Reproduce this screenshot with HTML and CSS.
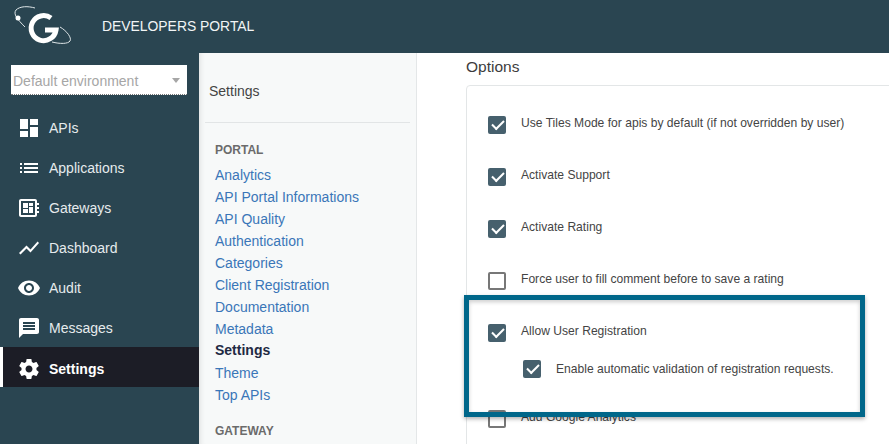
FILE: index.html
```html
<!DOCTYPE html>
<html lang="en">
  <head>
    <meta charset="UTF-8" />
    <title>Developers Portal</title>
    <link rel="stylesheet" href="styles.css">
  </head>
  <body>
    <header class="topbar">
      <svg class="logo" width="72" height="46" viewBox="0 0 72 46" fill="none">
        <path d="M35 5 C28 3 20 3 16 7 C13 11 17 16 25 24" stroke="#dfe6e8" stroke-width="1"/>
        <circle cx="18" cy="15" r="2.5" fill="#fff"/>
        <path d="M60 24 C67 28 72 35 70 38 C68 41 60 41 52 39" stroke="#dfe6e8" stroke-width="1"/>
        <path d="M51 15 A12.5 12.5 0 1 0 56 27 L45 27" stroke="#fff" stroke-width="5"/>
      </svg>
      <span class="brand">DEVELOPERS PORTAL</span>
    </header>

    <div class="content">
      <aside class="sidebar">
        <div class="env-select">
          <span>Default environment</span>
          <i class="caret"></i>
        </div>
        <nav class="menu">
          <a class="menu-item"><svg viewBox="0 0 24 24"><path d="M3 13h8V3H3v10zm0 8h8v-6H3v6zm10 0h8V11h-8v10zm0-18v6h8V3h-8z"/></svg>APIs</a>
          <a class="menu-item"><svg viewBox="0 0 24 24"><path d="M3 13h2v-2H3v2zm0 4h2v-2H3v2zm0-8h2V7H3v2zm4 4h14v-2H7v2zm0 4h14v-2H7v2zM7 7v2h14V7H7z"/></svg>Applications</a>
          <a class="menu-item"><svg viewBox="0 0 24 24"><path d="M22 9V7h-2V5c0-1.1-.9-2-2-2H4c-1.1 0-2 .9-2 2v14c0 1.1.9 2 2 2h14c1.1 0 2-.9 2-2v-2h2v-2h-2v-2h2v-2h-2V9h2zm-4 10H4V5h14v14zM6 13h5v4H6zm6-6h4v3h-4zM6 7h5v5H6zm6 4h4v6h-4z"/></svg>Gateways</a>
          <a class="menu-item"><svg viewBox="0 0 24 24"><path d="M3.5 18.49l6-6.01 4 4L22 6.92l-1.41-1.41-7.09 7.97-4-4L2 16.99z"/></svg>Dashboard</a>
          <a class="menu-item"><svg viewBox="0 0 24 24"><path d="M12 4.5C7 4.5 2.73 7.61 1 12c1.73 4.39 6 7.5 11 7.5s9.27-3.11 11-7.5c-1.73-4.39-6-7.5-11-7.5zM12 17c-2.76 0-5-2.24-5-5s2.24-5 5-5 5 2.24 5 5-2.24 5-5 5zm0-8c-1.66 0-3 1.34-3 3s1.34 3 3 3 3-1.34 3-3-1.34-3-3-3z"/></svg>Audit</a>
          <a class="menu-item"><svg viewBox="0 0 24 24"><path d="M20 2H4c-1.1 0-1.99.9-1.99 2L2 22l4-4h14c1.1 0 2-.9 2-2V4c0-1.1-.9-2-2-2zm-2 12H6v-2h12v2zm0-3H6V9h12v2zm0-3H6V6h12v2z"/></svg>Messages</a>
          <a class="menu-item active"><svg viewBox="0 0 24 24"><path d="M19.43 12.98c.04-.32.07-.64.07-.98s-.03-.66-.07-.98l2.11-1.65c.19-.15.24-.42.12-.64l-2-3.46c-.12-.22-.39-.3-.61-.22l-2.49 1c-.52-.4-1.08-.73-1.69-.98l-.38-2.65C14.46 2.18 14.25 2 14 2h-4c-.25 0-.46.18-.49.42l-.38 2.65c-.61.25-1.17.59-1.69.98l-2.49-1c-.23-.09-.49 0-.61.22l-2 3.46c-.13.22-.07.49.12.64l2.11 1.65c-.04.32-.07.65-.07.98s.03.66.07.98l-2.11 1.65c-.19.15-.24.42-.12.64l2 3.46c.12.22.39.3.61.22l2.49-1c.52.4 1.08.73 1.69.98l.38 2.65c.03.24.24.42.49.42h4c.25 0 .46-.18.49-.42l.38-2.65c.61-.25 1.17-.59 1.69-.98l2.49 1c.23.09.49 0 .61-.22l2-3.46c.12-.22.07-.49-.12-.64l-2.11-1.65zM12 15.5c-1.93 0-3.5-1.57-3.5-3.5s1.57-3.5 3.5-3.5 3.5 1.57 3.5 3.5-1.57 3.5-3.5 3.5z"/></svg>Settings</a>
        </nav>
      </aside>

      <section class="subnav">
        <h2 class="subnav-title">Settings</h2>
        <h3 class="subnav-group">PORTAL</h3>
        <ul class="subnav-list">
          <li><a>Analytics</a></li>
          <li><a>API Portal Informations</a></li>
          <li><a>API Quality</a></li>
          <li><a>Authentication</a></li>
          <li><a>Categories</a></li>
          <li><a>Client Registration</a></li>
          <li><a>Documentation</a></li>
          <li><a>Metadata</a></li>
          <li><a class="current">Settings</a></li>
          <li><a>Theme</a></li>
          <li><a>Top APIs</a></li>
        </ul>
        <h3 class="subnav-group">GATEWAY</h3>
      </section>

      <main class="main">
        <h2 class="options-title">Options</h2>
        <div class="options-card">
          <div class="option"><span class="check on"></span><span class="option-label">Use Tiles Mode for apis by default (if not overridden by user)</span></div>
          <div class="option"><span class="check on"></span><span class="option-label">Activate Support</span></div>
          <div class="option"><span class="check on"></span><span class="option-label">Activate Rating</span></div>
          <div class="option"><span class="check"></span><span class="option-label">Force user to fill comment before to save a rating</span></div>
          <div class="option"><span class="check on"></span><span class="option-label">Allow User Registration</span></div>
          <div class="option nested"><span class="check on"></span><span class="option-label">Enable automatic validation of registration requests.</span></div>
          <div class="option"><span class="check"></span><span class="option-label">Add Google Analytics</span></div>
        </div>
        <div class="highlight"></div>
      </main>
    </div>
  </body>
</html>
```

FILE: styles.css
```css
/* Developers portal settings */

* {
  margin: 0;
  padding: 0;
  box-sizing: border-box;
}

html,
body {
  height: 100%;
  overflow: hidden;
}

body {
  font-family: "Liberation Sans", Arial, sans-serif;
  font-size: 14px;
  color: #444;
  background: #2a4551;
  display: flex;
  flex-direction: column;
}

/* Header */
.topbar {
  height: 53px;
  flex: none;
  display: flex;
  align-items: center;
  background: #2a4551;
}

.logo {
  flex: none;
  margin-top: -1px;
}

.brand {
  margin-left: 30px;
  color: #f2f5f6;
  font-size: 13.9px;
  margin-top: -1px;
}

.content {
  flex: 1;
  display: flex;
  min-height: 0;
}

/* Sidebar */
.sidebar {
  width: 199px;
  flex: none;
  background: #2a4551;
}

.env-select {
  margin: 12px 12px 0 11px;
  height: 30px;
  padding: 2px 7px 0 2px;
  display: flex;
  align-items: center;
  justify-content: space-between;
  background: #fff;
  border-bottom: 1px dotted #777;
  color: #a6a6a6;
  font-size: 14px;
}

.caret {
  width: 0;
  height: 0;
  border-left: 4.5px solid transparent;
  border-right: 4.5px solid transparent;
  border-top: 5px solid #a6a6a6;
}

.menu {
  margin-top: 13px;
}

.menu-item {
  height: 40px;
  display: flex;
  align-items: center;
  padding-left: 17px;
  gap: 8px;
  color: #e6ebed;
  font-size: 14px;
}

.menu-item svg {
  width: 24px;
  height: 24px;
  fill: #fff;
  flex: none;
}

.menu-item.active {
  margin-top: -1px;
  padding: 3px 0 0 14px;
  background: #1c1d26;
  border-left: 3px solid #fff;
  color: #fff;
  font-weight: bold;
}

/* Settings navigation */
.subnav {
  width: 218px;
  flex: none;
  padding: 0 6px;
  background: #f7f9f9;
  border-right: 1px solid #e4e7e8;
  box-shadow: inset 6px 0 6px -6px rgba(0, 0, 0, 0.15);
}

.subnav-title {
  height: 70px;
  padding: 29px 0 0 4px;
  border-bottom: 1px solid #e2e5e6;
  font-size: 14px;
  font-weight: normal;
  color: #444;
  line-height: 18px;
}

.subnav-group {
  margin: 20px 0 8px 10px;
  font-size: 12px;
  line-height: 14px;
  font-weight: bold;
  color: #6b6b6b;
}

.subnav-list {
  list-style: none;
  padding-left: 10px;
}

.subnav-list li {
  height: 22px;
  line-height: 20px;
}

.subnav-list a {
  color: #3a76b8;
  font-size: 14px;
}

.subnav-list a.current {
  display: block;
  line-height: 18px;
  color: #1f2a44;
  font-weight: bold;
}

.subnav-list + .subnav-group {
  margin-top: 17px;
}

/* Options */
.main {
  position: relative;
  flex: 1;
  padding-left: 49px;
  background: #fff;
  overflow: hidden;
}

.options-title {
  height: 32px;
  padding-top: 5px;
  font-size: 15.5px;
  line-height: 18px;
  font-weight: normal;
  color: #3c3c3c;
}

.options-card {
  padding: 13px 0 0 21px;
  margin-right: -20px;
  height: 400px;
  border: 1px solid #e3e6e7;
  border-radius: 4px;
}

.option {
  height: 52px;
  display: flex;
  align-items: center;
  gap: 15px;
  font-size: 12.1px;
  color: #444;
}

.option-label {
  padding-bottom: 4px;
}

.option.nested {
  height: 20px;
  margin-left: 35px;
  margin-bottom: 14px;
}

.option.nested .option-label {
  padding-bottom: 0;
}

.check {
  position: relative;
  width: 18px;
  height: 18px;
  flex: none;
  border: 2px solid #777;
  border-radius: 2px;
  background: #fff;
}

.check.on {
  border: none;
  background: #46606d;
}

.check.on::after {
  content: "";
  position: absolute;
  left: 4px;
  top: 4px;
  width: 10px;
  height: 5px;
  border-left: 2px solid #fff;
  border-bottom: 2px solid #fff;
  transform: rotate(-45deg);
}

/* Annotation drawn over the page */
.highlight {
  position: absolute;
  left: 47px;
  top: 242px;
  width: 401px;
  height: 122px;
  border: 5px solid #00678a;
  box-shadow: 0 2px 4px rgba(0, 0, 0, 0.3), inset 0 2px 4px rgba(0, 0, 0, 0.2);
}
```
